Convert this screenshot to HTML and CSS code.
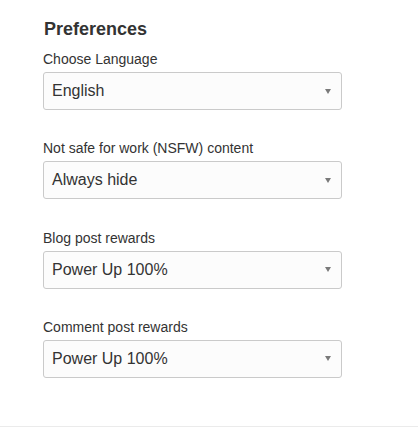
FILE: index.html
```html
<!DOCTYPE html>
<html>
<head>
<meta charset="utf-8">
<link rel="stylesheet" href="styles.css">
</head>
<body>
<div class="page">
  <h2 class="title">Preferences</h2>
  <div class="field">
    <label class="label">Choose Language</label>
    <div class="select"><span class="value">English</span><span class="arrow"></span></div>
  </div>
  <div class="field">
    <label class="label">Not safe for work (NSFW) content</label>
    <div class="select"><span class="value">Always hide</span><span class="arrow"></span></div>
  </div>
  <div class="field">
    <label class="label">Blog post rewards</label>
    <div class="select"><span class="value">Power Up 100%</span><span class="arrow"></span></div>
  </div>
  <div class="field">
    <label class="label">Comment post rewards</label>
    <div class="select"><span class="value">Power Up 100%</span><span class="arrow"></span></div>
  </div>
</div>
</body>
</html>
```

FILE: styles.css
```css
html, body {
  margin: 0;
  padding: 0;
  background: #fff;
}
body {
  font-family: "Liberation Sans", Arial, sans-serif;
  color: #333;
}
.page {
  box-sizing: border-box;
  height: 427px;
  border-bottom: 1px solid #ebebeb;
  padding: 19px 0 0 43px;
  display: flex;
  flex-direction: column;
}
.title {
  margin: 0 0 12px 1px;
  font-size: 18px;
  line-height: 20px;
  font-weight: bold;
  color: #333;
}
.field {
  display: flex;
  flex-direction: column;
  margin-bottom: 30.33px;
}
.label {
  font-size: 14px;
  line-height: 16px;
  margin-bottom: 5px;
  color: #333;
}
.select {
  box-sizing: border-box;
  width: 299px;
  height: 38px;
  border: 1px solid #cacaca;
  border-radius: 3px;
  background: #fcfcfc;
  padding: 8px 10px 8px 8px;
  display: flex;
  justify-content: space-between;
  font-size: 16px;
  line-height: 20px;
  color: #333;
}
.arrow {
  align-self: center;
  margin-top: 0;
  width: 0;
  height: 0;
  border-left: 3.5px solid transparent;
  border-right: 3.5px solid transparent;
  border-top: 5px solid #7a7a7a;
}
```
